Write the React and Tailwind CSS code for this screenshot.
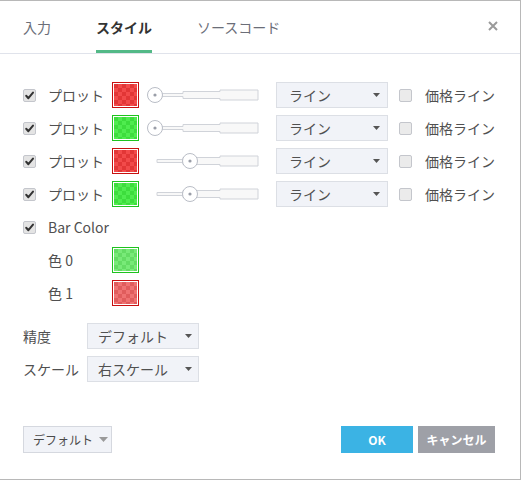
import React from 'react';

const font = { fontFamily: '"Noto Sans CJK JP", "Noto Sans", sans-serif' };

function CheckBox({ checked }) {
  if (!checked) {
    return <div className="w-[13px] h-[13px] rounded-[2px] border border-[#c4c6cc] bg-[#ebebeb]" />;
  }
  return (
    <div className="w-[13px] h-[13px] rounded-[2px] border border-[#c4c6cc] bg-[#e4e4e4] flex items-center justify-center">
      <svg width="11" height="11" viewBox="0 0 11 11">
        <path d="M2.2 5.8 L4.4 8.2 L9 2.6" stroke="#333" strokeWidth="2" fill="none" strokeLinecap="round" strokeLinejoin="round" />
      </svg>
    </div>
  );
}

const swatchColors = {
  red: { border: '#c81010', a: '#f24a4a', b: '#e23636' },
  green: { border: '#1ec31e', a: '#4fec4f', b: '#3ddd3d' },
  green2: { border: '#1ec31e', a: '#78ea78', b: '#64dc64' },
  red2: { border: '#c81010', a: '#ef7272', b: '#e05c5c' },
};

function Swatch({ kind }) {
  const c = swatchColors[kind];
  const id = 'chk-' + kind;
  return (
    <svg width="27" height="26" viewBox="0 0 27 26" className="shrink-0">
      <defs>
        <pattern id={id} width="8" height="8" patternUnits="userSpaceOnUse" x="2" y="2">
          <rect width="8" height="8" fill={c.a} />
          <rect width="4" height="4" fill={c.b} />
          <rect x="4" y="4" width="4" height="4" fill={c.b} />
        </pattern>
      </defs>
      <rect x="0.5" y="0.5" width="26" height="25" fill="#fff" stroke={c.border} />
      <rect x="2" y="2" width="23" height="22" fill={`url(#${id})`} />
    </svg>
  );
}

function Slider({ knob }) {
  return (
    <svg width="112" height="16" viewBox="0 0 112 16" className="shrink-0">
      <path
        d="M10 6.5 H36 V4.5 H73 V3 H111 V13 H73 V11.5 H36 V9.5 H10 Z"
        fill="#f8f8f8"
        stroke="#d0d3d9"
        strokeWidth="1"
      />
      <circle cx={knob} cy="8" r="7.5" fill="#fff" stroke="#b9bdc6" strokeWidth="1" />
      <circle cx={knob} cy="8" r="1.6" fill="#9a9ea8" />
    </svg>
  );
}

function Caret({ color = '#555', w = 7, h = 4 }) {
  return (
    <svg width={w} height={h} viewBox={`0 0 ${w} ${h}`}>
      <path d={`M0 0 H${w} L${w / 2} ${h} Z`} fill={color} />
    </svg>
  );
}

function Select({ label, pl = 'pl-[12px]', pr = 'pr-[7px]' }) {
  return (
    <div className={`w-[112px] h-[26px] border border-[#dcdfe5] bg-[#f1f3f8] flex items-center justify-between ${pl} ${pr} text-[14px] text-[#505050] shrink-0`}>
      <span>{label}</span>
      <Caret />
    </div>
  );
}

function PlotRow({ color, knob }) {
  return (
    <div className="flex items-center h-[26px] mb-[7px]">
      <div className="w-[25px]"><CheckBox checked /></div>
      <div className="w-[64px] text-[14px] text-[#505050]">プロット</div>
      <Swatch kind={color} />
      <div className="ml-[8px]"><Slider knob={knob} /></div>
      <div className="ml-[17px]"><Select label="ライン" /></div>
      <div className="ml-[11px]"><CheckBox /></div>
      <div className="ml-[13px] text-[14px] text-[#505050]">価格ライン</div>
    </div>
  );
}

export default function App() {
  return (
    <div style={font} className="w-[521px] h-[480px] bg-white border-t border-r border-b border-[#b8b8b8] flex flex-col">
      <div className="h-[53px] border-b border-[#e0e3eb] flex items-stretch pl-[23px] pr-[22px]">
        <div className="flex gap-[45px]">
          <div className="flex items-center pt-[4px] border-b-[3px] border-transparent text-[14px] text-[#6b6e78]">入力</div>
          <div className="flex items-center pt-[4px] border-b-[3px] border-[#53b987] text-[14px] font-bold text-[#333]">スタイル</div>
          <div className="flex items-center pt-[4px] border-b-[3px] border-transparent text-[14px] text-[#6b6e78]">ソースコード</div>
        </div>
        <div className="ml-auto flex items-center pb-[2px]">
          <svg width="10" height="10" viewBox="0 0 10 10">
            <path d="M1 1 L9 9 M9 1 L1 9" stroke="#9a9a9a" strokeWidth="2" />
          </svg>
        </div>
      </div>

      <div className="pl-[23px] pt-[28px]">
        <PlotRow color="red" knob={8} />
        <PlotRow color="green" knob={8} />
        <PlotRow color="red" knob={43} />
        <PlotRow color="green" knob={43} />

        <div className="flex items-center h-[26px] mb-[7px]">
          <div className="w-[25px]"><CheckBox checked /></div>
          <div className="text-[14px] text-[#505050]">Bar Color</div>
        </div>
        <div className="flex items-center h-[26px] mb-[7px]">
          <div className="w-[25px]" />
          <div className="w-[64px] text-[14px] text-[#505050]">色 0</div>
          <Swatch kind="green2" />
        </div>
        <div className="flex items-center h-[26px] mb-[17px]">
          <div className="w-[25px]" />
          <div className="w-[64px] text-[14px] text-[#505050]">色 1</div>
          <Swatch kind="red2" />
        </div>

        <div className="flex items-center h-[26px] mb-[7px]">
          <div className="w-[64px] text-[14px] text-[#505050]">精度</div>
          <Select label="デフォルト" pl="pl-[10px]" pr="pr-[6px]" />
        </div>
        <div className="flex items-center h-[26px]">
          <div className="w-[64px] text-[14px] text-[#505050]">スケール</div>
          <Select label="右スケール" pl="pl-[10px]" pr="pr-[6px]" />
        </div>
      </div>

      <div className="mt-auto pb-[26px] pl-[23px] pr-[25px] flex items-center">
        <div className="w-[89px] h-[27px] border border-[#d5d8df] bg-[#f1f3f8] flex items-center pl-[9px] gap-[6px] text-[12px] text-[#4a4a4a]">
          <span>デフォルト</span>
          <Caret color="#9a9a9a" w={9} h={5} />
        </div>
        <div className="ml-auto flex gap-[5px]">
          <div className="w-[72px] h-[27px] bg-[#3bb3e4] text-white text-[12px] font-bold flex items-center justify-center">OK</div>
          <div className="w-[77px] h-[27px] bg-[#9ea0a7] text-white text-[12px] font-bold flex items-center justify-center">キャンセル</div>
        </div>
      </div>
    </div>
  );
}
